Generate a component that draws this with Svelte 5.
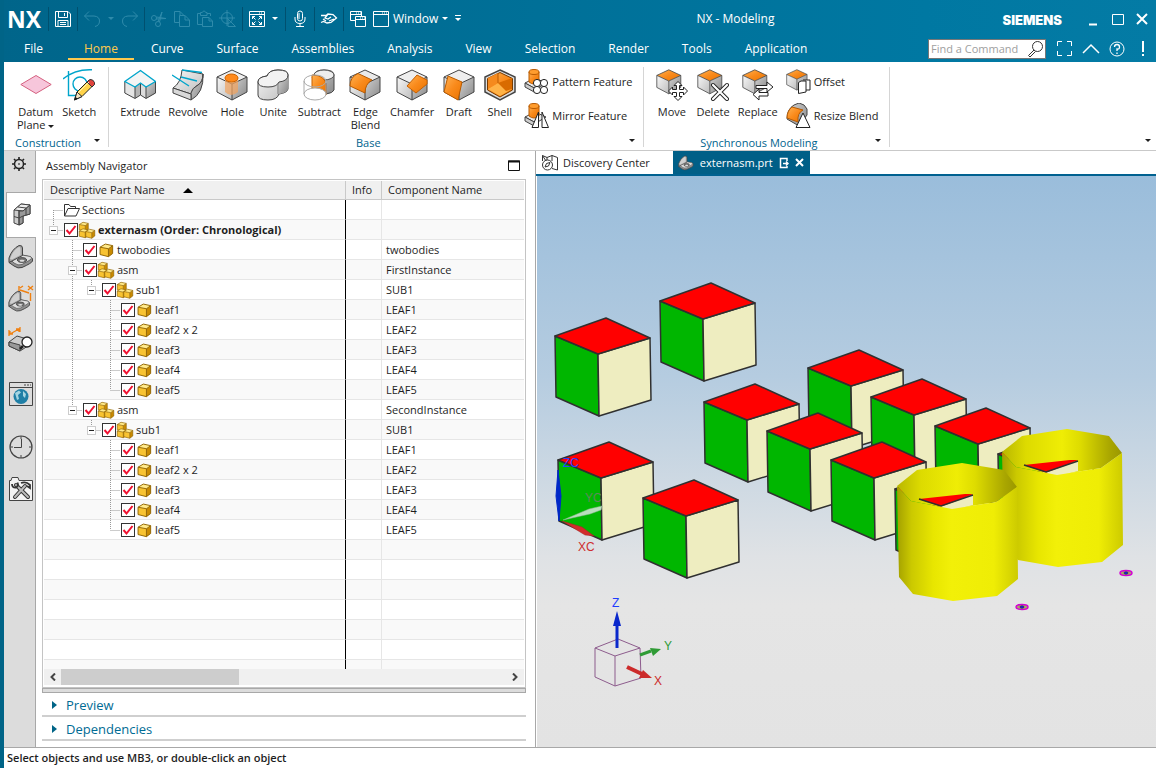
<script>
  const menus = ['File', 'Home', 'Curve', 'Surface', 'Assemblies', 'Analysis', 'View', 'Selection', 'Render', 'Tools', 'Application'];

  const groups = [
    { name: 'Construction', large: [['datum', 'Datum', 'Plane', true], ['sketch', 'Sketch']], small: [] },
    {
      name: 'Base',
      large: [['extrude', 'Extrude'], ['revolve', 'Revolve'], ['hole', 'Hole'], ['unite', 'Unite'], ['subtract', 'Subtract'], ['edge', 'Edge', 'Blend'], ['chamfer', 'Chamfer'], ['draft', 'Draft'], ['shell', 'Shell']],
      small: [['pattern', 'Pattern Feature'], ['mirror', 'Mirror Feature']]
    },
    {
      name: 'Synchronous Modeling',
      large: [['move', 'Move'], ['delete', 'Delete'], ['replace', 'Replace']],
      small: [['offset', 'Offset'], ['resize', 'Resize Blend']]
    }
  ];

  const leaves = (through) => ['leaf1', 'leaf2 x 2', 'leaf3', 'leaf4', 'leaf5'].map((name, i) => ({
    name, comp: 'LEAF' + (i + 1), depth: 3, kind: 'part', last: i === 4, through
  }));

  const rows = [
    { name: 'Sections', comp: '', depth: 0, kind: 'folder', first: true, through: [] },
    { name: 'externasm (Order: Chronological)', comp: '', depth: 0, kind: 'asm', open: true, last: true, bold: true, through: [] },
    { name: 'twobodies', comp: 'twobodies', depth: 1, kind: 'part', through: [] },
    { name: 'asm', comp: 'FirstInstance', depth: 1, kind: 'asm', open: true, through: [] },
    { name: 'sub1', comp: 'SUB1', depth: 2, kind: 'asm', open: true, last: true, through: [1] },
    ...leaves([1]),
    { name: 'asm', comp: 'SecondInstance', depth: 1, kind: 'asm', open: true, last: true, through: [] },
    { name: 'sub1', comp: 'SUB1', depth: 2, kind: 'asm', open: true, last: true, through: [] },
    ...leaves([])
  ];
  const fillers = Array.from({ length: 30 });

  // Top apex of every block in the scene, back to front.
  const blocks = [[606, 318], [711, 283], [609, 442], [694, 480], [859, 350], [922, 379], [986, 408], [1049, 436], [755, 384], [818, 413], [882, 442], [946, 471]];

  let active = $state('Home');
  let command = $state('');
</script>

{#snippet cube(top, left, right)}
  <path d="M16 1 31 8 16 15 1 8Z" fill={top} />
  <path d="M1 8 16 15V31L1 23Z" fill={left} />
  <path d="M31 8 16 15V31L31 23Z" fill={right} />
  <path d="M16 1 31 8V23L16 31 1 23V8ZM1 8 16 15 31 8M16 15V31" fill="none" stroke="#444" />
{/snippet}

{#snippet orangeTop()}
  <g transform="scale(.8)">{@render cube('url(#or)', 'url(#lg)', 'url(#dg)')}</g>
{/snippet}

{#snippet boss()}
  <path d="M1 14 11 9 22 14 12 20Z" fill="#e8e8e8" stroke="#444" />
  <path d="M1 14V18L12 24V20Z" fill="#ccc" stroke="#444" />
  <path d="M5 3V13Q10 17 15 13V3Z" fill="url(#or)" stroke="#b85a00" />
  <ellipse cx="10" cy="3" rx="5" ry="2.5" fill="#ff9d2e" stroke="#b85a00" />
{/snippet}

{#snippet big(name)}
  <svg class="big" width="32" height="32" viewBox="0 0 32 32" aria-hidden="true">
    {#if name === 'datum'}
      <path d="M.8 15.500 16 6.500 31.200 15.500 16 24.500Z" fill="#f7c6db" stroke="#d4607f" />
    {:else if name === 'sketch'}
      <g fill="none" stroke="#00a5cb" stroke-width="1.400"><path d="M0 10Q12 0 29 .8M5.500 2V26.500H13" /><circle cx="17" cy="15" r="7" /></g>
      <path d="M11.500 31 14 23 26 11 31 15.500 19 27.500Z" fill="#ffd34a" stroke="#222" />
      <path d="M11.500 31 14 23 19 27.500Z" fill="#f7e3c0" stroke="#222" /><path d="M11.500 31 12.500 28 14.500 29.500Z" fill="#111" />
      <path d="M24 13 27 10.500Q30 10 31.500 13.500V15.500L29 18Z" fill="#e0433c" stroke="#333" /><path d="M15 24 26 13" stroke="#fff4b0" />
    {:else if name === 'extrude'}
      <path d="M.8 13 16.500 2 32 13V24L22 29.500V18L16.500 14 11 18V29.500L.8 24Z" fill="#e5e5e5" />
      <path d="M22 18 32 13V24L22 29.500Z" fill="url(#dg)" /><path d="M11 18 16.500 14V26L11 29.500Z" fill="#b5b5b5" /><path d="M16.500 14 22 18V29.500L16.500 26Z" fill="#dcdcdc" />
      <path d="M.8 13V24L11 29.500 16.500 26 22 29.500 31.500 24V13M11 18V29M22 18V29M16.500 14V26" fill="none" stroke="#444" />
      <path d="M.8 12.500 16.500 1.500 31.500 12.500 22 18 16.500 14 11 18Z" fill="#f4f4f4" stroke="#00a5cb" stroke-width="1.400" />
    {:else if name === 'revolve'}
      <path d="M10 1 31 5Q31 13 26 16Q20 19 19 25L1 19Q9 14 10 1Z" fill="url(#lg)" stroke="#444" />
      <path d="M31 5Q32 24 19 31L19 24Q20 19 26 16Q31 13 31 5Z" fill="url(#dg)" stroke="#444" /><path d="M1 19 19 25V31L1 24Z" fill="#d8d8d8" stroke="#444" />
      <path d="M10 1 30 3.500M0 6 17 17M9 8 25 12" fill="none" stroke="#00a5cb" stroke-width="1.400" />
    {:else if name === 'hole'}
      {@render cube('#eee', 'url(#lg)', 'url(#dg)')}
      <path d="M9 8V23Q15 29 22 23V8Z" fill="#f2a35c" opacity=".7" /><ellipse cx="15.500" cy="9" rx="6.500" ry="4" fill="#ff8a1c" stroke="#cc6300" />
    {:else if name === 'unite'}
      <path d="M1 13Q1 8 10 7 12 1 21 1 31 1 31 6V20Q30 24 22 25 20 31 11 31 1 31 1 26Z" fill="url(#lg)" stroke="#444" />
      <path d="M22 13Q30 12 31 6V20Q30 24 22 25Z" fill="url(#dg)" /><path d="M1 13Q1 8 10 7 12 1 21 1 31 1 31 6 31 12 22 13 20 18 11 18 1 18 1 13Z" fill="#f2f2f2" stroke="#444" /><path d="M21 14V25" stroke="#777" />
    {:else if name === 'subtract'}
      <path d="M11 6Q12 1 21 1 31 1 31 6V21Q30 24 23 25V14L9 9Z" fill="url(#dg)" stroke="#444" /><ellipse cx="21" cy="6" rx="10" ry="5" fill="#eee" stroke="#555" />
      <path d="M9 6Q23 6 23 17V26Q20 22 9 20Z" fill="url(#or)" stroke="#c66000" />
      <g fill="none" stroke="#aaa"><ellipse cx="12" cy="12" rx="11" ry="6" /><path d="M1 12V25M23 12V25" /></g><ellipse cx="12" cy="25" rx="11" ry="6" fill="#fff" stroke="#aaa" />
    {:else if name === 'edge'}
      {@render cube('#e9e9e9', 'url(#lg)', 'url(#dg)')}
      <path d="M9 4.500 23 11Q16 15 16 24L1 17Q1 8 9 4.500Z" fill="url(#or)" stroke="#b85a00" />
    {:else if name === 'chamfer'}
      {@render cube('#eee', 'url(#lg)', 'url(#dg)')}
      <path d="M21 6 31 11V15L20 24 11 17Z" fill="url(#or)" stroke="#c66000" />
    {:else if name === 'draft'}
      {@render cube('#eee', '#ddd', 'url(#dg)')}
      <path d="M5 7 19 13 15 31 1 23Z" fill="url(#or)" stroke="#b85a00" />
    {:else if name === 'shell'}
      <path d="M16 1 31 8V23L16 31 1 23V8Z" fill="#ddd" stroke="#444" stroke-width="1.500" />
      <path d="M16 3.500 28.500 9.500V21L16 28 3.500 21V9.500Z" fill="url(#or)" stroke="#7a3c00" />
      <path d="M4 20 14 14 28 20 16 27Z" fill="#ffb347" /><path d="M14 4V14L4 20V9Z" fill="#f58a1e" /><path d="M14 14 28 9V20L22 22Z" fill="#d96b00" /><path d="M14 4V14" stroke="#b85a00" />
    {:else}
      {@render orangeTop()}
      {#if name === 'move'}
        <path d="m22 12.500 4 4h-2.500v4h4V18l4 4-4 4v-2.500h-4v4H26l-4 4-4-4h2.500v-4h-4V26l-4-4 4-4v2.500h4v-4H18Z" fill="#fff" stroke="#222" />
      {:else if name === 'delete'}
        <path d="m16 16 14 14m0-14-14 14" stroke="#222" stroke-width="4" stroke-linecap="round" /><path d="m16 16 14 14m0-14-14 14" stroke="#fff" stroke-width="2.200" stroke-linecap="round" />
      {:else}
        <path d="M14 16.500h11V13l6 5-6 5v-3.500H14ZM26 23.500H17V20l-6 5.500 6 5.500V27h9Z" fill="#fff" stroke="#222" />
      {/if}
    {/if}
  </svg>
{/snippet}

{#snippet mid(name)}
  <svg width="26" height="26" viewBox="0 0 26 26" aria-hidden="true">
    {#if name === 'pattern'}
      {@render boss()}<g fill="#fff" stroke="#222"><circle cx="13" cy="14" r="3.600" /><circle cx="20" cy="14" r="3.600" /><circle cx="13" cy="21" r="3.600" /><circle cx="20" cy="21" r="3.600" /></g>
    {:else if name === 'mirror'}
      {@render boss()}<path d="M14.500 9V24.500H8ZM18 9V24.500H24.500Z" fill="#fff" stroke="#222" />
    {:else if name === 'offset'}
      <g transform="scale(.68)">{@render cube('url(#or)', 'url(#lg)', 'url(#dg)')}</g>
      <path d="M17 11h7v10h-4M12.500 13.500 15 12h5v11l-7.500 1.500Z" fill="#fff" stroke="#222" />
    {:else}
      <path d="M8 2 13 0Q19 1 21 6V12L13 23 1 16Q1 6 8 2Z" fill="url(#dg)" stroke="#444" />
      <path d="M6 4 17 7Q11 10 12 19L1 15Q1 8 6 4Z" fill="url(#or)" stroke="#b85a00" /><path d="M17 10 24 24.500H10Z" fill="#fff" stroke="#222" />
    {/if}
  </svg>
{/snippet}

{#snippet goldBox(x, y, s)}
  <g transform="translate({x} {y}) scale({s})">
    <path d="M1 4 6 1 13 2.500 9 5.500Z" fill="#ffe98a" /><path d="M1 4 9 5.500V13L1 11Z" fill="#f8c331" /><path d="M9 5.500 13 2.500V10L9 13Z" fill="#c98a00" />
    <path d="M1 4 6 1 13 2.500V10L9 13 1 11ZM1 4 9 5.500 13 2.500M9 5.500V13" fill="none" stroke="#8f6400" stroke-width=".900" />
  </g>
{/snippet}

{#snippet bracket()}
  <path d="M3 17 14 11 23 13Q25 14 24.500 17 24 19 14 23.500 10 25 6 22L1 18.500Z" fill="#909090" stroke="#444" />
  <path d="M3 16 14 11 22.500 12.500Q25 14 22 16L14 20.500Q10 22 6 19Z" fill="#dedede" stroke="#555" stroke-width=".8" />
  <ellipse cx="14" cy="16" rx="4.500" ry="2.300" fill="#777" stroke="#444" /><ellipse cx="14" cy="16.800" rx="2.500" ry="1" fill="#ddd" />
  <path d="M1 18.500V14Q4 5 11 1.500 14.500 1 14.500 4V11.500L4 17Z" fill="#a5a5a5" stroke="#444" />
  <path d="M2 15Q5 6 11 3 12.500 3 12.500 5V11L4 15.500Z" fill="#d0d0d0" />
{/snippet}

{#snippet caret()}<svg class="caret" width="6" height="3" aria-hidden="true"><path d="M0 0H6L3 3Z" fill="currentColor" /></svg>{/snippet}

<svg class="defs" width="0" height="0" aria-hidden="true">
  <defs>
    <linearGradient id="or" x2="1" y2="1"><stop stop-color="#ffb254" /><stop offset=".5" stop-color="#f98a1b" /><stop offset="1" stop-color="#ea7300" /></linearGradient>
    <linearGradient id="lg" x2="1" y2="1"><stop stop-color="#f7f7f7" /><stop offset="1" stop-color="#bdbdbd" /></linearGradient>
    <linearGradient id="dg" x2="1" y2="1"><stop stop-color="#d2d2d2" /><stop offset="1" stop-color="#888" /></linearGradient>
    <linearGradient id="wall"><stop stop-color="#a3a000" /><stop offset=".12" stop-color="#cbc900" /><stop offset=".3" stop-color="#e8e600" /><stop offset=".45" stop-color="#f2f008" /><stop offset=".8" stop-color="#efed05" /><stop offset="1" stop-color="#cdcb00" /></linearGradient>
    <linearGradient id="inner"><stop stop-color="#b9b700" /><stop offset=".2" stop-color="#dddb00" /><stop offset=".5" stop-color="#efed05" /><stop offset=".65" stop-color="#dedc00" /><stop offset=".9" stop-color="#a9a600" /><stop offset="1" stop-color="#9a9700" /></linearGradient>
  </defs>
</svg>

<div class="app">
  <header>
    <div class="titlebar">
      <span class="nx">NX</span>
      <i class="sep"></i>
      <button aria-label="Save"><svg width="18" height="18"><path d="M1.500 1.500H14L16.500 4V16.500H1.500ZM4.500 1.500V7.500H13.500V1.500M10.500 3V6M4 16.500V10.500H14V16.500M6 12.500H12M6 14.500H12" /></svg></button>
      <i class="sep"></i>
      <button class="dim" aria-label="Undo"><svg width="18" height="18"><path d="M6 1.500 1.500 6 6 10.500M1.500 6H11Q16.500 6.500 16.500 11T12 16.500" /></svg></button>
      <button class="dim tiny" aria-label="Undo list">{@render caret()}</button>
      <button class="dim" aria-label="Redo"><svg width="18" height="18"><path d="M12 1.500 16.500 6 12 10.500M16.500 6H7Q1.500 6.500 1.500 11T6 16.500" /></svg></button>
      <i class="sep"></i>
      <button class="dim" aria-label="Cut"><svg width="18" height="18"><circle cx="4" cy="8" r="2.500" /><circle cx="8" cy="14" r="2.500" /><path d="M6 9 16 8.500 6.500 7M8 11.500 12 2 9.500 12" /></svg></button>
      <button class="dim wide" aria-label="Copy"><svg width="18" height="18"><path d="M6 12.500H1.500V1.500H7L11 5.500M7 1.500V5.500M6.500 5.500H12L16.500 10V16.500H6.500ZM12 5.500V10H16" /></svg></button>
      <button class="dim wide" aria-label="Paste"><svg width="18" height="18"><path d="M6 14.500H1.500V3.500H4.500M11 3.500H14.500V6M4.500 5.500V2.500H6L8 .800 10 2.500H11V5.500ZM6.500 7.500H13L16.500 11V16.500H6.500ZM13 7.500V11H16" /></svg></button>
      <button class="dim wide" aria-label="Repeat"><svg width="18" height="18"><circle cx="8" cy="8" r="5.500" /><path d="M8 0V16M0 8H16M8 8 16.500 16.500H9V9Z" /></svg></button>
      <i class="sep"></i>
      <button aria-label="Fit"><svg width="18" height="18"><path d="M1.500 1.500H16.500V16.500H1.500ZM1.500 4.500H16.500M4.500 9V6.500H7M11 6.500H13.500V9M4.500 12V14.500H7M11 14.500H13.500V12M4.500 6.500 7.500 9.500M13.500 6.500 10.500 9.500M4.500 14.500 7.500 11.500M13.500 14.500 10.500 11.500" /><path d="M11 3H15" stroke-dasharray="1 1" /></svg></button>
      <button class="tiny" aria-label="Fit options">{@render caret()}</button>
      <i class="sep"></i>
      <button aria-label="Speech"><svg width="18" height="18"><rect x="6.500" y="1" width="5" height="10" rx="2.500" /><path d="M4 7V9Q4 13.500 9 13.500T14 9V7M9 13.500V16.500M5 16.500H13M7 4H9M7 6H9M7 8H9" /></svg></button>
      <i class="sep"></i>
      <button aria-label="Touch"><svg width="18" height="18"><path d="M1 5.500H6L8 4 13 4.500 16.500 8 11 12.500 7 13 3.500 11.500 1 12.500M8 4 5 8 8 9 11 7M3 9 6 11M9 11 14 9" stroke-width="1.300" /></svg></button>
      <i class="sep"></i>
      <button aria-label="Switch window"><svg width="18" height="18"><path d="M6 10.500H1.500V1.500H12.500V6M1.500 4.500H12M6.500 6.500H16.500V16.500H6.500ZM6.500 9.500H16" /><path d="M7 3H12M11 8H16" stroke-dasharray="1 1" /></svg></button>
      <button class="window"><svg width="18" height="18"><path d="M1.500 1.500H16.500V16.500H1.500ZM1.500 4.500H16.500" /><path d="M10 3H15" stroke-dasharray="1 1" /></svg><span>Window</span>{@render caret()}</button>
      <button class="tiny" aria-label="Customize"><svg width="8" height="7"><path d="M1 .500H7" /><path class="solid" d="M1 3H7L4 6Z" /></svg></button>
      <h1>NX - Modeling</h1>
      <span class="brand">SIEMENS</span>
      <button class="win" aria-label="Minimize"><svg width="12" height="14"><path d="M1 12.500H9" stroke-width="2" /></svg></button>
      <button class="win" aria-label="Maximize"><svg width="14" height="14"><path d="M1.500 2.500H12.500V12.500H1.500Z" /></svg></button>
      <button class="win" aria-label="Close"><svg width="12" height="14"><path d="M1 2 11 12M11 2 1 12" stroke-width="2" /></svg></button>
    </div>
    <div class="menubar">
      <nav>
        {#each menus as m}
          <button class:active={active === m} onclick={() => (active = m)}>{m}</button>
        {/each}
      </nav>
      <label class="find">
        <input type="text" placeholder="Find a Command" aria-label="Find a Command" bind:value={command} />
        <svg width="18" height="18"><circle cx="10.500" cy="6.500" r="5" /><path d="M7 10 1.500 15.500 3 17 8.500 11.500" /></svg>
      </label>
      <button class="tool" aria-label="Full screen"><svg width="18" height="18"><path d="M1.500 6V1.500H6M11 1.500H15.500V6M15.500 11V15.500H11M6 15.500H1.500V11" /></svg></button>
      <button class="tool" aria-label="Minimize ribbon"><svg width="18" height="18"><path d="M1 13 9 5 17 13" stroke-width="1.500" /></svg></button>
      <button class="tool" aria-label="Help"><svg width="18" height="18"><circle cx="9" cy="9" r="7" /><path d="M6.500 7Q6.500 4.500 9 4.500T11.500 7 9 9V11M9 12.500V14" stroke-width="1.300" /></svg></button>
      <button class="tool" aria-label="Alerts"><svg width="18" height="18"><path d="M9 1V12M9 14V16" stroke-width="2" /></svg></button>
    </div>
  </header>

  <section class="ribbon">
    {#each groups as g}
      <div class="group">
        <div class="tools">
          {#each g.large as [icon, a, b, menu]}
            <button class="large">{@render big(icon)}<span>{a}{#if b}<br />{b}{/if}{#if menu}&nbsp;{@render caret()}{/if}</span></button>
          {/each}
          {#if g.small.length}
            <div class="smalls">
              {#each g.small as [icon, a]}<button>{@render mid(icon)}<span>{a}</span></button>{/each}
            </div>
          {/if}
        </div>
        <div class="foot"><span>{g.name}</span><button aria-label="{g.name} options">{@render caret()}</button></div>
      </div>
    {/each}
    <button class="more" aria-label="Ribbon options">{@render caret()}</button>
  </section>

  <main>
    <aside>
      <button class="gear" aria-label="Resource bar options"><svg width="16" height="16"><circle cx="8" cy="8" r="4.500" fill="none" stroke="#222" stroke-width="1.500" /><circle cx="8" cy="8" r=".8" /><path d="M8 1V3M8 13V15M1 8H3M13 8H15M3 3 4.500 4.500M13 3 11.500 4.500M3 13 4.500 11.500M13 13 11.500 11.500" stroke="#222" stroke-width="1.600" /></svg></button>
      <button class="on" aria-label="Assembly Navigator"><svg width="22" height="26" stroke="#444"><path d="M3 8 10 2 19 3V12L12 14V21L8 23 3 21Z" fill="#ccc" /><path d="M3 8 10 2 19 3 12 9Z" fill="#eee" /><path d="M12 9 19 3V12L12 14V21L8 23V9Z" fill="#999" /><path d="M3 14.500 8 16 12 14M7 5 15 6V13M8 9V23" fill="none" /></svg></button>
      <button aria-label="Constraint Navigator"><svg width="26" height="26">{@render bracket()}</svg></button>
      <button aria-label="Part Navigator"><svg width="26" height="28"><g transform="translate(0 5) scale(.88)">{@render bracket()}</g><path d="M11 1V6M12 5 21 8M12 3 15 1M20 1 25 5M25 1 20 5M22.500 8V16" stroke="#f08010" stroke-width="1.400" fill="none" /></svg></button>
      <button aria-label="Reuse Library"><svg width="26" height="28"><path d="M1 15 9 9 19 12 23 17 12 24 1 19Z" fill="#ccc" stroke="#444" /><path d="M1 15 12 18V24L1 19Z" fill="#999" stroke="#444" /><path d="M1 9V3M12 5V0M2 7 11 2M2 4V7H5M8 2H11V5" stroke="#f08010" stroke-width="1.300" fill="none" /><circle cx="19" cy="15" r="5" fill="#fff" stroke="#222" stroke-width="1.300" /><path d="M15 19 12 22" stroke="#222" stroke-width="2.500" /></svg></button>
      <button class="web" aria-label="Web Browser"><svg width="24" height="24"><path d="M.5.500H23.500V23.500H.5ZM.5 5.500H23.500" fill="none" stroke="#444" /><path d="M15 3H22" stroke="#444" stroke-dasharray="2 1" /><circle cx="12" cy="14.500" r="7.500" fill="#1f7fa6" /><path d="M6 11 10 8.500 12 10.500 9 13 10 17 8 18ZM14 9 17 12 16 16 14 14Z" fill="#a5d5e2" /></svg></button>
      <button aria-label="History"><svg width="24" height="24" fill="none" stroke="#444"><circle cx="12" cy="12" r="11" stroke-width="1.200" /><path d="M12.500 4V12.500H5M12 1V4M12 20V23M1 12H4M20 12H23" /></svg></button>
      <button aria-label="Roles"><svg width="24" height="24"><path d="M.5 23.500V3.500H2L3 .5H9L10 3.500H23.500V23.500Z" fill="#f4f4f4" stroke="#444" /><path d="M7 8 19 20M16 9 6 20" stroke="#333" stroke-width="4" stroke-linecap="round" /><path d="M7 8 19 20M16 9 6 20" stroke="#bbb" stroke-width="2" stroke-linecap="round" /><path d="M3 7Q3 11 7 10.500 10 9 8.500 5.500M12 6Q17 4 21 8V11L18 9" fill="none" stroke="#333" stroke-width="1.800" /></svg></button>
    </aside>

    <section class="navigator">
      <div class="head"><h2>Assembly Navigator</h2><button aria-label="Maximize panel"><svg width="14" height="12"><path d="M1.500 1H12.500V10.500H1.500Z" fill="none" stroke="#111" /><path d="M1 1.500H13" stroke="#111" stroke-width="2" /></svg></button></div>
      <div class="grid">
        <div class="scroll">
          <table>
            <colgroup><col class="c1" /><col class="c2" /><col /></colgroup>
            <thead>
              <tr><th>Descriptive Part Name <svg width="10" height="5" aria-hidden="true"><path d="M0 5 5 0 10 5Z" /></svg></th><th>Info</th><th>Component Name</th></tr>
            </thead>
            <tbody>
              {#each rows as r}
                {@const cx = 9.5 + 19 * r.depth}
                <tr>
                  <td>
                    <div class="node" class:bold={r.bold}>
                      <span class="branch" style="width: {20 + 19 * r.depth}px">
                        <svg width="100%" height="20" aria-hidden="true">
                          {#each r.through as t}<path d="M{9.5 + 19 * t} 0V20" />{/each}
                          <path d="M{cx} {r.first ? 10 : 0}V{r.last ? 10 : 20}M{cx} 10.500H{cx + 9}" />
                        </svg>
                        {#if r.open}<button aria-label="Collapse {r.name}"></button>{/if}
                      </span>
                      {#if r.kind === 'folder'}
                        <svg width="16" height="16" aria-hidden="true"><path d="M.500 14V2.500H5L6.500 4.500H11.500V6.500M.500 14 4 6.500H15.500L12 14Z" fill="none" stroke="#333" /></svg>
                      {:else}
                        <input type="checkbox" checked aria-label={r.name} />
                        <svg width="18" height="18" aria-hidden="true">
                          {#if r.kind === 'asm'}
                            {@render goldBox(0.5, 0.5, 0.75)}{@render goldBox(0.5, 7, 0.75)}{@render goldBox(7, 7.5, 0.75)}
                          {:else}
                            {@render goldBox(2, 2, 1.05)}
                          {/if}
                        </svg>
                      {/if}
                      <span class="name">{r.name}</span>
                    </div>
                  </td>
                  <td></td>
                  <td>{r.comp}</td>
                </tr>
              {/each}
              {#each fillers as _}<tr><td></td><td></td><td></td></tr>{/each}
            </tbody>
          </table>
        </div>
        <div class="hbar">
          <button aria-label="Scroll left"><svg width="6" height="8"><path d="M5 .500 1.500 4 5 7.500" /></svg></button>
          <div class="track"><div class="thumb"></div></div>
          <button aria-label="Scroll right"><svg width="6" height="8"><path d="M1 .500 4.500 4 1 7.500" /></svg></button>
        </div>
      </div>
      <div class="splitter"></div>
      <button class="fold"><svg width="5" height="8"><path d="M0 0 5 4 0 8Z" /></svg>Preview</button>
      <button class="fold"><svg width="5" height="8"><path d="M0 0 5 4 0 8Z" /></svg>Dependencies</button>
    </section>

    <section class="view">
      <div class="tabs">
        <button class="tab"><svg width="18" height="18" fill="none" stroke="#333"><path d="M1.500 7V1.500L6 3.500 11 1.500 16.500 3.500V16L11 14.500M11 1.500V7M6 3.500V6M1.500 1.500 5 7" /><circle cx="6.500" cy="11" r="5" /><path d="M4 13 5.500 9.500 9 8.500 7.500 12Z" /></svg>Discovery Center</button>
        <div class="tab current">
          <svg width="16" height="16" aria-hidden="true"><g transform="scale(.62)">{@render bracket()}</g></svg>
          <span>externasm.prt</span>
          <svg width="10" height="12" fill="none" stroke="#fff" stroke-width="1.500" aria-hidden="true"><path d="M8 4V1.500H1.500V10.500H8V9M4 6.500H9M7 4.500 9 6.500 7 8.500" /></svg>
          <button aria-label="Close externasm.prt"><svg width="9" height="9"><path d="M1 1 8 8M8 1 1 8" stroke="#fff" stroke-width="2" /></svg></button>
        </div>
      </div>
      <div class="canvas">
        <svg class="scene" role="img" aria-label="3D view of externasm.prt">
          <g transform="translate(-537 -176)">
            {#each blocks as [x, y], i}
              {#if i === 8}
                {@render drum(105, -34)}
              {/if}
              <g transform="translate({x} {y})" stroke="#303030" stroke-width="1.500" stroke-linejoin="round">
                <path d="M-51 18-8 36-7 98-50 79Z" fill="#00b600" />
                <path d="M-8 36 44 20 45 82-7 98Z" fill="#eeedc0" />
                <path d="M0 0 44 20-8 36-51 18Z" fill="#f00" />
              </g>
            {/each}
            {@render drum(0, 0)}
            <path d="M558 470 561 496 559 521 556 496Z" fill="#0028c8" stroke="#0028c8" />
            <path d="M563 520 589 509 602 506 601 510 590 514Z" fill="#b9dfbd" stroke="#8fb493" stroke-width=".5" />
            <path d="M562 521 582 527 594 536 585 535Z" fill="#d22c2c" stroke="#a52424" stroke-width=".5" />
            <text x="563" y="467" fill="#2a40ff">ZC</text>
            <text x="585" y="502" fill="#5c8a5c">YC</text>
            <text x="578" y="551" fill="#cf2f2f">XC</text>
            <g fill="none" stroke="#8d5c8d"><path d="M595 648 618 639 640 648 615 656ZM595 648V677L615 686 641 678 640 648M615 656V686" /></g>
            <path d="M617 648V624" stroke="#0a28cc" stroke-width="3" /><path d="M617 611 621 626H613Z" fill="#0a28cc" />
            <path d="M640 655 651 651" stroke="#2f9b35" stroke-width="3" /><path d="M661 649 653 656 650 648Z" fill="#2f9b35" />
            <path d="M627 667 642 674" stroke="#cc2b2b" stroke-width="4" /><path d="M652 678 639 678 643 670Z" fill="#cc2b2b" />
            <text x="612" y="607" fill="#1e3cff">Z</text><text x="664" y="650" fill="#2f9b35">Y</text><text x="654" y="685" fill="#cc2b2b">X</text>
            {#each [[1126, 573], [1022, 607]] as [x, y]}
              <ellipse cx={x} cy={y} rx="6" ry="2.500" fill="#a9a36a" stroke="#d400d4" stroke-width="1.500" /><ellipse cx={x} cy={y} rx="2" ry="1.200" fill="#1020f0" stroke="#333" stroke-width=".6" />
            {/each}
          </g>
        </svg>
      </div>
    </section>
  </main>

  <footer>Select objects and use MB3, or double-click an object</footer>
</div>

{#snippet drum(dx, dy)}
  <g transform="translate({dx} {dy})">
    <path d="M897 486 917 470 962 463 1004 470 1017 487 996 502 952 509 911 501Z" fill="url(#inner)" />
    <path d="M919 499 965 494 973 494 942 507Z" fill="#f00" />
    <path d="M940 507 973 495V505L953 510Z" fill="#eeedc0" />
    <path d="M919 499 941 506 973 495" fill="none" stroke="#303030" stroke-width="1.500" />
    <path d="M897 486 911 501 952 509 996 502 1017 487 1018 579 997 596 953 601 913 594 899 577Z" fill="url(#wall)" />
  </g>
{/snippet}

<style>
  :global(body) { margin: 0; }
  .app { box-sizing: border-box; height: 100vh; min-height: 500px; display: flex; flex-direction: column; border-left: 4px solid #006487; background: #fff; color: #1e1e1e; font: 11px/16px "Open Sans", "Noto Sans", sans-serif; overflow: hidden; }
  button { border: 0; padding: 0; margin: 0; background: none; color: inherit; font: inherit; display: flex; align-items: center; justify-content: center; }
  svg { flex: none; display: block; }
  h1, h2 { margin: 0; font-weight: 400; }
  .defs { position: absolute; }

  header { margin-left: -4px; background: linear-gradient(90deg, #00658a, #0078a2 80%, #047ba5); color: #fff; font-size: 12px; }
  header svg { fill: none; stroke: currentColor; }
  header .caret, header .solid { fill: currentColor; stroke: none; }
  .titlebar { display: flex; align-items: center; height: 36px; padding: 1px 2px 0 7px; box-sizing: border-box; }
  .nx { font: 700 23px/30px "Open Sans", sans-serif; width: 38px; }
  .sep { width: 1px; height: 24px; margin: 0 3px; background: #00506f; }
  .titlebar button { width: 22px; height: 24px; }
  .titlebar .wide { width: 23px; }
  .titlebar .dim { color: #2f8bab; }
  .titlebar .tiny { width: 14px; }
  .titlebar .dim.tiny { width: 16px; }
  .titlebar .window { width: auto; padding: 0 3px; gap: 3px; }
  .window .caret { margin-left: 1px; }
  h1 { flex: 1; text-align: center; font-size: 12px; padding-left: 3px; white-space: nowrap; }
  .brand { font: 900 13px/16px Inter, "Liberation Sans", sans-serif; margin: 2px 20px 0 0; }
  .titlebar .win { width: 24px; }
  .menubar { display: flex; height: 26px; align-items: center; }
  nav { display: flex; flex: 1; align-self: stretch; padding-left: 8px; gap: 1px; }
  nav button { box-sizing: border-box; padding: 4px 16px 0; border-bottom: 2px solid transparent; height: 24px; }
  nav button:first-child { margin-right: 8px; }
  nav .active { color: #ffc94d; border-color: #ffc94d; }
  .find { box-sizing: border-box; display: flex; align-items: center; width: 118px; height: 20px; background: #fff; border: 1px solid #777; color: #333; margin-right: 6px; }
  .find input { flex: 1; min-width: 0; border: 0; padding: 0 0 0 2px; font: inherit; font-size: 11px; outline: 0; background: none; }
  .find input::placeholder { color: #a0a0a0; opacity: 1; }
  .tool { width: 26px; height: 20px; }

  .ribbon { display: flex; height: 88px; border-bottom: 1px solid #c9c9c9; flex: none; }
  .group { display: flex; flex-direction: column; margin: 5px 0 3px; border-right: 1px solid #d5d5d5; }
  .tools { display: flex; flex: 1; min-height: 0; align-items: flex-start; padding: 2px 11px 0 7px; }
  .group:first-child .tools { padding: 2px 8px 0 9px; }
  .large { flex-direction: column; justify-content: flex-start; min-width: 41px; padding: 0 4px; line-height: 13px; }
  .large .big { margin-bottom: 4px; }
  .large .caret { display: inline-block; vertical-align: middle; }
  .smalls { display: flex; flex-direction: column; gap: 8px; padding-left: 4px; }
  .smalls button { justify-content: flex-start; gap: 2px; height: 26px; }
  .foot { display: flex; height: 9px; line-height: 9px; color: #00648e; padding-left: 6px; }
  .foot span { flex: 1; text-align: center; }
  .foot button { width: 22px; height: 5px; color: #1e1e1e; }
  .more { margin: auto 5px 8px auto; }

  main { display: flex; flex: 1; min-height: 0; }
  aside { box-sizing: border-box; width: 32px; flex: none; background: #dcdcdc; border-right: 1px solid #a8a8a8; }
  aside button { width: 34px; height: 42px; }
  aside .gear { width: 30px; height: 26px; margin-bottom: 15px; }
  aside .on { box-sizing: border-box; height: 46px; margin: 0 0 -2px 2px; width: 30px; background: #fff; border: 1px solid #a8a8a8; border-right: 0; }
  aside .web { margin: 11px 0; }

  .navigator { box-sizing: border-box; flex: 0 0 43.4%; min-width: 300px; padding: 0 9px 6px 6px; border-right: 1px solid #a8a8a8; display: flex; flex-direction: column; }
  .head { display: flex; align-items: center; justify-content: space-between; height: 28px; padding: 1px 5px 0 4px; box-sizing: border-box; }
  h2 { font-size: 11px; padding-top: 1px; }
  .grid { flex: 1; min-height: 0; display: flex; flex-direction: column; border: 1px solid #c4c4c4; padding: 1px; }
  .scroll { flex: 1; min-height: 0; overflow: hidden; }
  table { width: 100%; table-layout: fixed; border-collapse: separate; border-spacing: 0; }
  .c1 { width: 302px; }
  .c2 { width: 36px; }
  th, td { box-sizing: border-box; height: 20px; padding: 0 0 0 4px; border-bottom: 1px solid #e6e6e6; border-right: 1px solid #e6e6e6; text-align: left; font-weight: 400; white-space: nowrap; line-height: 19px; }
  th { background: #f0f0f0; border-color: #c9c9c9; height: 19px; padding-left: 6px; line-height: 18px; }
  th:last-child, td:last-child { border-right: 0; }
  th svg { display: inline-block; margin-left: 15px; vertical-align: 1px; }
  td:first-child { padding: 0; border-right-color: #000; }
  tbody tr:nth-child(even) { background: #f9f9f9; }
  .node { display: flex; align-items: center; height: 19px; }
  .bold { font-weight: 700; }
  .branch { position: relative; flex: none; height: 20px; }
  .branch path { fill: none; stroke: #999; stroke-dasharray: 1 1; }
  .branch button { position: absolute; right: 6px; top: 6px; width: 9px; height: 9px; background: linear-gradient(#222, #222) center / 5px 1px no-repeat #fff; border: 1px solid #ccc; }
  .node input { appearance: none; flex: none; margin: 0; width: 14px; height: 14px; border: 1px solid #333; background: #fff url("data:image/svg+xml,%3Csvg xmlns='http://www.w3.org/2000/svg' viewBox='0 0 12 12'%3E%3Cpath d='M1.500 6 4.500 9.500 10.500 2' fill='none' stroke='%23f01030' stroke-width='2'/%3E%3C/svg%3E") center / 12px 12px no-repeat; }
  .name { padding-left: 2px; }

  .hbar { display: flex; height: 16px; background: #f0f0f0; margin-bottom: 1px; }
  .hbar button { width: 17px; }
  .hbar path { fill: none; stroke: #444; stroke-width: 2; }
  .track { flex: 1; display: flex; }
  .thumb { width: 40%; background: #cdcdcd; }
  .splitter { height: 3px; border: 1px solid #a8a8a8; background: #dcdcdc; flex: none; }
  .fold { justify-content: flex-start; gap: 9px; padding: 2px 0 0 10px; height: 24px; font-size: 13px; color: #006b94; border-bottom: 2px solid #cfcfcf; box-sizing: border-box; flex: none; }
  .fold svg { fill: #006487; }

  .view { flex: 1; min-width: 0; display: flex; flex-direction: column; }
  .tabs { display: flex; height: 23px; border-bottom: 2px solid #006190; flex: none; }
  .tab { padding: 0 23px 0 5px; gap: 4px; display: flex; align-items: center; }
  .current { background: #005f87; color: #fff; padding: 0 6px 0 5px; gap: 6px; }
  .canvas { flex: 1; min-height: 0; margin-left: 1px; background: linear-gradient(#9abddb, #b5cce0 200px, #dfe2e5 380px, #e5e5e5 430px, #e3e3e3); }
  .scene { width: 100%; height: 100%; }
  .scene text { font: 12px "Liberation Sans", sans-serif; }

  footer { flex: none; height: 21px; line-height: 20px; border-top: 1px solid #a8a8a8; padding-left: 3px; font-weight: 600; box-sizing: border-box; }
</style>
